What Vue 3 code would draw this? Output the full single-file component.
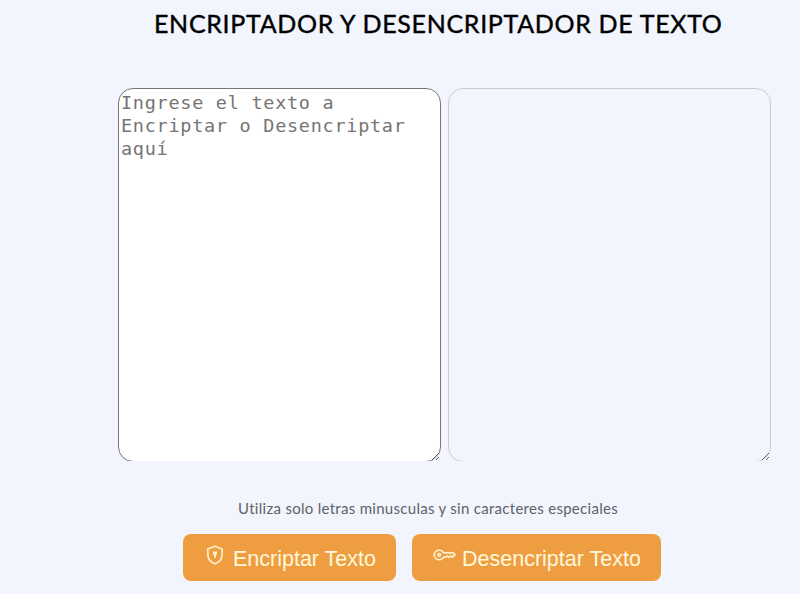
<script setup>
import { ref } from 'vue'

const input = ref('')
const output = ref('')
</script>

<template>
  <main class="page">
    <h1 class="title"><span>ENCRIPTADOR Y DESENCRIPTADOR DE TEXTO</span></h1>
    <section class="panels">
      <textarea v-model="input" class="area" placeholder="Ingrese el texto a Encriptar o Desencriptar aquí"></textarea>
      <textarea v-model="output" class="area result"></textarea>
    </section>
    <p class="hint"><span>Utiliza solo letras minusculas y sin caracteres especiales</span></p>
    <div class="actions">
      <button class="btn encrypt">
        <svg class="shield" width="18" height="20" viewBox="0 0 18 20" fill="none">
          <path d="M9 1.2 16.2 4v5.4c0 4.2-3 7.8-7.2 9.3-4.2-1.5-7.2-5.1-7.2-9.3V4Z" stroke="currentColor" stroke-width="1.7" />
          <path d="M7 6.5h4v3.3h-1v2.9H8V9.8H7Z" fill="currentColor" />
        </svg>
        <span>Encriptar Texto</span>
      </button>
      <button class="btn decrypt">
        <svg class="key" width="23" height="12" viewBox="0 0 23 12" fill="none" stroke="currentColor" stroke-width="1.7">
          <path d="M10.6 3.8h9.5L22 5.7l-2.5 2.5-1.7-1.3-1.7 1.5-1.8-1.5-1.4 1.2h-2.3A5 4.8 0 1 1 10.6 3.8Z" stroke-linejoin="round" />
          <circle cx="6.2" cy="5.8" r="1.3" />
        </svg>
        <span>Desencriptar Texto</span>
      </button>
    </div>
  </main>
</template>

<style>
body {
  margin: 0;
  background: #fff;
}
</style>

<style scoped>
.page {
  box-sizing: border-box;
  width: 800px;
  height: 594px;
  padding-top: 8px;
  overflow: hidden;
  background: #f2f5fd;
}
.title {
  margin: 0 0 0 154px;
  height: 80px;
  font: 400 25px/30px Lato, sans-serif;
  letter-spacing: 0.68px;
  color: #000;
  white-space: nowrap;
  -webkit-text-stroke: 0.4px #000;
}
.panels {
  display: flex;
  gap: 7px;
  height: 373px;
  padding-left: 118px;
  overflow: hidden;
}
.area {
  box-sizing: border-box;
  width: 323px;
  height: 374px;
  margin: 0;
  padding: 2px;
  border: 1px solid #767676;
  border-radius: 15px;
  background: #fff;
  outline: none;
  overflow: auto;
  resize: both;
  font: 18.5px/23px "DejaVu Sans Mono", monospace;
  letter-spacing: 0.72px;
}
.area::placeholder {
  color: #757575;
}
.result {
  border-color: #c8cbd7;
  background: transparent;
}
.hint {
  margin: 38px 0 0 238px;
  height: 35px;
  font: 15px/18px Lato, sans-serif;
  letter-spacing: 0.29px;
  color: #5f6269;
  white-space: nowrap;
}
.actions {
  display: flex;
  gap: 16px;
  padding-left: 183px;
}
.btn {
  display: flex;
  align-items: flex-start;
  box-sizing: border-box;
  height: 47px;
  padding: 11px 0 0;
  border: 0;
  border-radius: 8px;
  background: #ee9e41;
  color: #fff8dc;
  font: 21.5px/28px "Liberation Sans", Arial, sans-serif;
  white-space: nowrap;
}
.encrypt {
  width: 213px;
  padding-left: 23px;
  gap: 9px;
}
.decrypt {
  width: 249px;
  padding-left: 21px;
  gap: 6px;
}
.shield,
.key {
  flex: none;
  color: #ffedc9;
}
.key {
  margin-top: 4px;
}
</style>
